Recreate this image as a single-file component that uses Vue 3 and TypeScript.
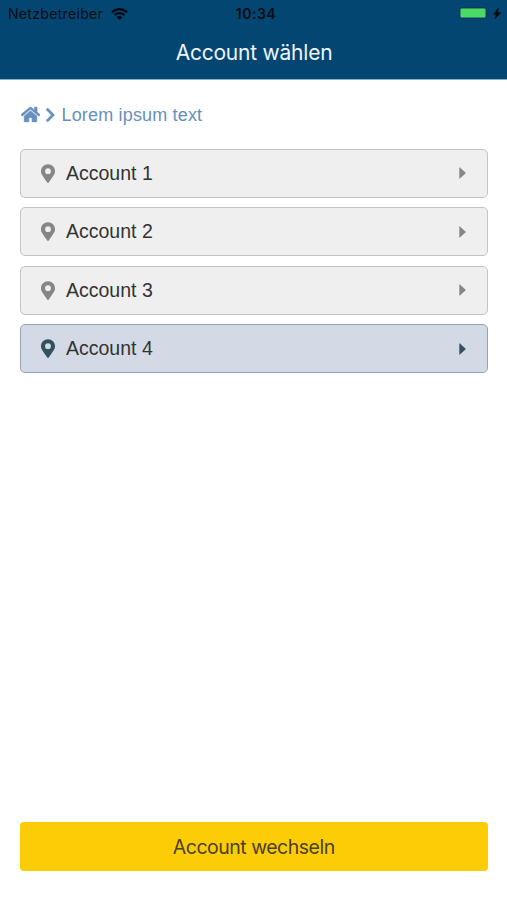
<script setup lang="ts">
import { ref } from 'vue'

interface Account {
  id: number
  name: string
}

const accounts: Account[] = [1, 2, 3, 4].map((id) => ({ id, name: `Account ${id}` }))
const selectedId = ref<number>(4)
</script>

<template>
  <div class="screen">
    <header class="header">
      <div class="status">
        <div class="carrier">
          <span class="carrier-name">Netzbetreiber</span>
          <svg class="wifi" viewBox="0 0 17 12" aria-hidden="true">
            <path d="M.9 4.2Q8.5-2 16.1 4.2M3.5 7.1Q8.5 3 13.5 7.1" fill="none" stroke="currentColor" stroke-width="2.2" />
            <path d="M5.6 9.2Q8.5 6.7 11.4 9.2L8.5 12Z" fill="currentColor" />
          </svg>
        </div>
        <time class="clock">10:34</time>
        <div class="power">
          <svg class="battery" viewBox="0 0 32 12" aria-hidden="true">
            <rect x=".5" y=".5" width="27" height="11" rx="2.2" fill="none" stroke="#07365c" />
            <rect x="1.5" y="1.5" width="25" height="9" rx="1" fill="#4cd964" />
            <path d="M29.5 4.3q1.7 1.7 0 3.4z" fill="#07304f" />
          </svg>
          <svg class="bolt" viewBox="0 0 8 11" aria-hidden="true">
            <path d="M5.4 0 .4 6.3h2.7L2.1 11 7.7 4.5H4.7z" fill="currentColor" stroke="currentColor" stroke-width=".5" />
          </svg>
        </div>
      </div>
      <h1 class="title">Account wählen</h1>
    </header>

    <main class="content">
      <nav class="breadcrumb">
        <svg class="home" viewBox="0 0 576 512" aria-hidden="true">
          <path
            fill="currentColor"
            stroke="currentColor"
            stroke-width="14"
            d="M280.4 148.3 96 300.1V464a16 16 0 0 0 16 16l112.1-.3a16 16 0 0 0 15.9-16V368a16 16 0 0 1 16-16h64a16 16 0 0 1 16 16v95.6a16 16 0 0 0 16 16.1L464 480a16 16 0 0 0 16-16V300L295.7 148.3a12.2 12.2 0 0 0-15.3 0zM571.6 251.5 488 182.6V44.1a12 12 0 0 0-12-12h-56a12 12 0 0 0-12 12v72.6L318.5 43a48 48 0 0 0-61 0L4.3 251.5a12 12 0 0 0-1.6 16.9l25.5 31a12 12 0 0 0 16.9 1.6l235.3-193.7a12.2 12.2 0 0 1 15.3 0L530.9 301a12 12 0 0 0 16.9-1.6l25.5-31a12 12 0 0 0-1.7-16.9z"
          />
        </svg>
        <svg class="chevron" viewBox="0 0 10 16" aria-hidden="true">
          <path d="M1.8 1.7 8 8l-6.2 6.3" fill="none" stroke="currentColor" stroke-width="2.7" />
        </svg>
        <span class="crumb">Lorem ipsum text</span>
      </nav>

      <div class="accounts">
        <button
          v-for="account in accounts"
          :key="account.id"
          type="button"
          class="account"
          :class="{ selected: account.id === selectedId }"
          @click="selectedId = account.id"
        >
          <svg class="pin" viewBox="0 0 384 512" aria-hidden="true">
            <path
              fill="currentColor"
              fill-rule="evenodd"
              d="M172.3 501.7C27 291 0 269.4 0 192 0 86 86 0 192 0s192 86 192 192c0 77.4-27 99-172.3 309.7a24 24 0 0 1-39.4 0zM192 272a80 80 0 1 0 0-160 80 80 0 0 0 0 160z"
            />
          </svg>
          <span class="name">{{ account.name }}</span>
          <svg class="caret" viewBox="0 0 7 12" aria-hidden="true">
            <path d="M.3.7v10.6q0 .7.6.2l5.5-5q.5-.5 0-1L.9.5Q.3 0 .3.7z" fill="currentColor" />
          </svg>
        </button>
      </div>

      <button type="button" class="submit">Account wechseln</button>
    </main>
  </div>
</template>

<style>
body {
  margin: 0;
  background: #fff;
}
</style>

<style scoped>
.screen {
  display: flex;
  flex-direction: column;
  height: 900px;
  overflow: hidden;
  background: #fff;
  font-family: "Liberation Sans", Arial, sans-serif;
}
.header {
  box-sizing: border-box;
  flex: none;
  height: 80px;
  background: #044672;
  border-bottom: 1px solid #86b0d0;
  font-family: Inter, sans-serif;
}
.status {
  display: grid;
  grid-template-columns: 1fr auto 1fr;
  align-items: center;
  height: 27px;
  padding: 0 5px 0 8px;
  color: #050b12;
}
.carrier,
.power {
  display: flex;
  align-items: center;
}
.carrier {
  gap: 8px;
}
.carrier-name {
  font-size: 14px;
  letter-spacing: 0.32px;
}
.wifi {
  width: 17px;
  height: 12px;
}
.clock {
  padding-left: 2px;
  font-size: 14px;
  font-weight: 600;
  letter-spacing: 0.5px;
}
.power {
  justify-content: flex-end;
  gap: 2px;
}
.battery {
  width: 32px;
  height: 12px;
  margin: -1px 0 0;
}
.bolt {
  width: 8px;
  height: 11px;
  margin-right: 1px;
  overflow: visible;
}
.title {
  margin: 0;
  padding: 1px 0 0 1px;
  color: #eef5fb;
  font-size: 21px;
  font-weight: 400;
  letter-spacing: -0.22px;
  line-height: 50px;
  text-align: center;
}
.content {
  display: flex;
  flex: 1;
  flex-direction: column;
  padding: 22px 19.5px 29px 20px;
}
.breadcrumb {
  display: flex;
  align-items: center;
  height: 26px;
  padding-left: 0.5px;
  color: #6690bd;
}
.home {
  width: 19px;
  height: 17px;
  margin-top: -1px;
}
.chevron {
  width: 10px;
  height: 16px;
  margin: -1px 7px 0 5px;
}
.crumb {
  padding-top: 1px;
  font-size: 18px;
  letter-spacing: 0.17px;
}
.accounts {
  display: grid;
  gap: 9.67px;
  margin-top: 20.5px;
}
.account {
  box-sizing: border-box;
  display: flex;
  align-items: center;
  height: 49px;
  padding: 0 21px 0 20px;
  border: 1px solid #c4c4c4;
  border-radius: 5px;
  background: #efefef;
  color: #868686;
  font-family: inherit;
}
.account.selected {
  border-color: #93a4b0;
  background: #d3dae6;
  color: #34505f;
}
.pin {
  width: 14px;
  height: 19px;
}
.name {
  margin-left: 11px;
  color: #333;
  font-size: 19.5px;
}
.caret {
  width: 7px;
  height: 12px;
  margin-left: auto;
}
.submit {
  height: 49px;
  margin-top: auto;
  padding: 0;
  border: 0;
  border-radius: 4px;
  background: #fccd07;
  color: #4b401d;
  font-family: Inter, sans-serif;
  font-size: 19.5px;
  letter-spacing: -0.5px;
}
</style>
